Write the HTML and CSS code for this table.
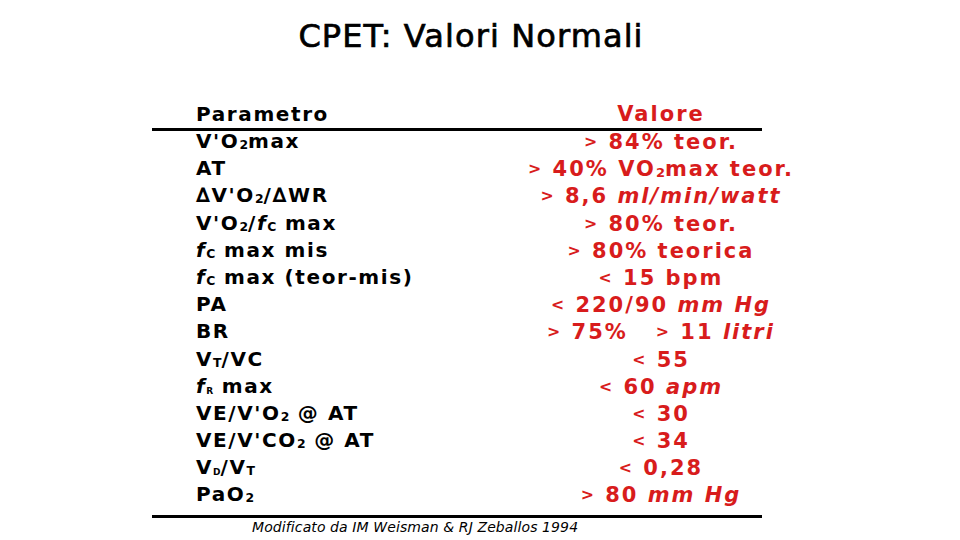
FILE: index.html
```html
<!DOCTYPE html>
<html lang="it">
<head>
<meta charset="utf-8">
<title>CPET: Valori Normali</title>
<link rel="stylesheet" href="styles.css">
</head>
<body>
<main class="slide">
  <h1 class="title">CPET: Valori Normali</h1>
  <section class="table">
    <div class="row head">
      <span class="param">Parametro</span>
      <span class="val">Valore</span>
    </div>
    <div class="rows">
      <div class="row"><span class="param">V'O<sub>2</sub>max</span><span class="val"><span class="op">&gt;</span> 84% teor.</span></div>
      <div class="row"><span class="param">AT</span><span class="val"><span class="op">&gt;</span> 40% VO<sub>2</sub>max teor.</span></div>
      <div class="row"><span class="param">∆V'O<sub>2</sub>/∆WR</span><span class="val"><span class="op">&gt;</span> 8,6 <i>ml/min/watt</i></span></div>
      <div class="row"><span class="param">V'O<sub>2</sub>/<i>f</i><sub>C</sub> max</span><span class="val"><span class="op">&gt;</span> 80% teor.</span></div>
      <div class="row"><span class="param"><i>f</i><sub>C</sub> max mis</span><span class="val"><span class="op">&gt;</span> 80% teorica</span></div>
      <div class="row"><span class="param"><i>f</i><sub>C</sub> max (teor-mis)</span><span class="val"><span class="op">&lt;</span> 15 bpm</span></div>
      <div class="row"><span class="param">PA</span><span class="val"><span class="op">&lt;</span> 220/90 <i>mm Hg</i></span></div>
      <div class="row"><span class="param">BR</span><span class="val"><span class="op">&gt;</span> 75%&nbsp;&nbsp; <span class="op">&gt;</span> 11 <i>litri</i></span></div>
      <div class="row"><span class="param">V<sub>T</sub>/VC</span><span class="val"><span class="op">&lt;</span> 55</span></div>
      <div class="row"><span class="param"><i>f</i><sub class="tiny">R</sub> max</span><span class="val"><span class="op">&lt;</span> 60 <i>apm</i></span></div>
      <div class="row"><span class="param">VE/V'O<sub>2</sub> @ AT</span><span class="val"><span class="op">&lt;</span> 30</span></div>
      <div class="row"><span class="param">VE/V'CO<sub>2</sub> @ AT</span><span class="val"><span class="op">&lt;</span> 34</span></div>
      <div class="row"><span class="param">V<sub class="tiny">D</sub>/V<sub>T</sub></span><span class="val"><span class="op">&lt;</span> 0,28</span></div>
      <div class="row"><span class="param">PaO<sub>2</sub></span><span class="val"><span class="op">&gt;</span> 80 <i>mm Hg</i></span></div>
    </div>
    <p class="note">Modificato da IM Weisman &amp; RJ Zeballos 1994</p>
  </section>
</main>
</body>
</html>
```
FILE: styles.css
```css
html, body {
  margin: 0;
  padding: 0;
  background: #fff;
}

.slide {
  width: 960px;
  height: 540px;
  overflow: hidden;
  font-family: "DejaVu Sans", sans-serif;
  color: #000;
}

.title {
  margin: 0;
  padding: 16px 18px 0 0;
  height: 101px;
  box-sizing: border-box;
  text-align: center;
  font-weight: normal;
  font-size: 32px;
  letter-spacing: 1.1px;
  line-height: 40px;
  -webkit-text-stroke: 0.7px #000;
}

.table {
  width: 610px;
  margin-left: 152px;
}

.row {
  display: grid;
  grid-template-columns: 374px 270px;
  height: 27.2px;
  line-height: 27.2px;
  font-weight: bold;
  font-size: 20px;
  letter-spacing: 1.6px;
  white-space: nowrap;
}

.head {
  height: 27px;
  line-height: 27px;
  border-bottom: 3px solid #000;
}

.rows {
  margin-top: -3px;
  padding-bottom: 6px;
  border-bottom: 3px solid #000;
}

.param {
  padding-left: 44px;
}

.val {
  text-align: center;
  color: #d81c1c;
  font-size: 21px;
  letter-spacing: 2px;
}

.op {
  font-size: 0.75em;
  vertical-align: 0.1em;
}

sub {
  font-size: 0.62em;
  line-height: 0;
  vertical-align: -0.12em;
  letter-spacing: 0;
}

sub.tiny {
  font-size: 0.45em;
}

i {
  font-style: italic;
}

.note {
  margin: 0;
  padding-left: 100px;
  font-style: italic;
  font-size: 14px;
  letter-spacing: 0.1px;
  line-height: 18px;
  white-space: nowrap;
}
```
